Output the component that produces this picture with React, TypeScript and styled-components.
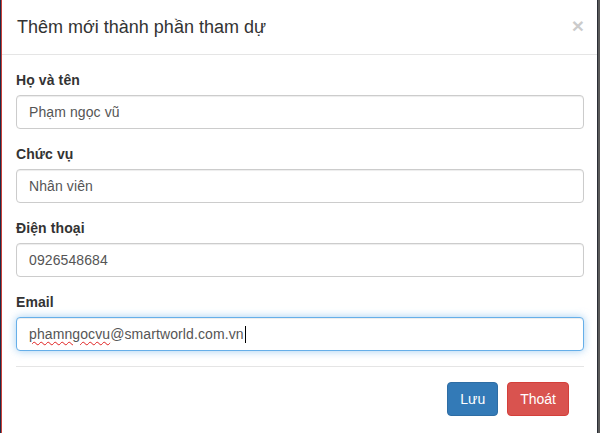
import React from "react";
import styled, { createGlobalStyle } from "styled-components";

const Global = createGlobalStyle`
  html, body { margin: 0; padding: 0; }
  body {
    background: #5a5a5a;
    font-family: "Liberation Sans", Arial, Helvetica, sans-serif;
    font-size: 14px;
    line-height: 1.42857;
    color: #333;
  }
  * { box-sizing: border-box; }
`;

const Page = styled.div`
  display: flex;
  height: 433px;
  width: 600px;
  overflow: hidden;
`;

const EdgeStrip = styled.div<{ $w: number; $bg: string }>`
  width: ${(p) => p.$w}px;
  flex: none;
  background: ${(p) => p.$bg};
`;

const Modal = styled.div`
  width: 597px;
  flex: none;
  background: #fff;
  border-left: 1px solid #c9413a;
  border-right: 1px solid #2b2f36;
  display: flex;
  flex-direction: column;
`;

const Header = styled.div`
  display: flex;
  align-items: flex-start;
  justify-content: space-between;
  padding: 15px 13px 14px 15px;
  border-bottom: 1px solid #e5e5e5;
`;

const Title = styled.h4`
  margin: 0;
  font-size: 18px;
  font-weight: 500;
  line-height: 25px;
  color: #333;
`;

const Close = styled.button`
  background: transparent;
  border: 0;
  padding: 0;
  margin-top: 0px;
  font-family: inherit;
  font-size: 21px;
  font-weight: 700;
  line-height: 1;
  color: #000;
  opacity: 0.2;
  cursor: pointer;
`;

const Body = styled.div`
  padding: 15px 13px 0 14px;
`;

const FormGroup = styled.div`
  margin-bottom: 15px;
`;

const Label = styled.label`
  display: block;
  font-weight: 700;
  margin-bottom: 5px;
  line-height: 20px;
  color: #333;
  letter-spacing: 0.1px;
`;

const Input = styled.input`
  display: block;
  width: 100%;
  height: 34px;
  padding: 6px 12px;
  font-family: inherit;
  font-size: 14px;
  line-height: 1.42857;
  letter-spacing: 0.1px;
  color: #555;
  background: #fff;
  border: 1px solid #ccc;
  border-radius: 4px;
  box-shadow: inset 0 1px 1px rgba(0, 0, 0, 0.075);
  outline: none;
`;

const FocusedInput = styled.div`
  display: flex;
  align-items: center;
  width: 100%;
  height: 34px;
  padding: 6px 12px;
  font-size: 14px;
  line-height: 20px;
  letter-spacing: 0.1px;
  color: #555;
  background: #fff;
  border: 1px solid #66afe9;
  border-radius: 4px;
  box-shadow: inset 0 1px 1px rgba(0, 0, 0, 0.075),
    0 0 8px rgba(102, 175, 233, 0.6);
  white-space: pre;
`;

const Misspelled = styled.span`
  text-decoration: underline wavy #e02020;
  text-decoration-thickness: 1px;
  text-underline-offset: 2px;
`;

const Caret = styled.span`
  display: inline-block;
  width: 1px;
  height: 17px;
  background: #000;
  margin-left: 1px;
`;

const Footer = styled.div`
  display: flex;
  justify-content: flex-end;
  gap: 9px;
  padding: 15px 15px 15px 0;
  border-top: 1px solid #e5e5e5;
`;

const Button = styled.button<{ $variant: "primary" | "danger" }>`
  height: 34px;
  padding: 6px 12px;
  font-family: inherit;
  font-size: 14px;
  line-height: 20px;
  color: #fff;
  border-radius: 4px;
  cursor: pointer;
  background: ${(p) => (p.$variant === "primary" ? "#337ab7" : "#d9534f")};
  border: 1px solid ${(p) => (p.$variant === "primary" ? "#2e6da4" : "#d43f3a")};
`;

const fields = [
  { label: "Họ và tên", value: "Phạm ngọc vũ" },
  { label: "Chức vụ", value: "Nhân viên" },
  { label: "Điện thoại", value: "0926548684" },
];

export default function App() {
  return (
    <>
      <Global />
      <Page>
        <EdgeStrip $w={1} $bg="#1e2b47" />
        <Modal>
          <Header>
            <Title>Thêm mới thành phần tham dự</Title>
            <Close aria-label="Close">×</Close>
          </Header>
          <Body>
            {fields.map((f) => (
              <FormGroup key={f.label}>
                <Label>{f.label}</Label>
                <Input defaultValue={f.value} readOnly />
              </FormGroup>
            ))}
            <FormGroup>
              <Label>Email</Label>
              <FocusedInput>
                <Misspelled>phamngocvu</Misspelled>
                @smartworld.com.vn
                <Caret />
              </FocusedInput>
            </FormGroup>
            <Footer>
              <Button $variant="primary">Lưu</Button>
              <Button $variant="danger">Thoát</Button>
            </Footer>
          </Body>
        </Modal>
        <EdgeStrip $w={2} $bg="#5a5a5a" />
      </Page>
    </>
  );
}
